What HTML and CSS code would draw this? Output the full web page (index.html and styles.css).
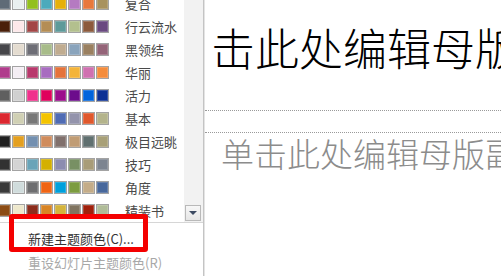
FILE: index.html
```html
<!DOCTYPE html>
<html lang="zh-CN">
<head>
<meta charset="utf-8">
<title>主题颜色</title>
<link rel="stylesheet" href="styles.css">
</head>
<body>
<div class="panel">
  <div class="gallery">
    <div class="list">
      <div class="row"><div class="sw"><i style="background:#5f6b77"></i><i style="background:#e9efef"></i><i style="background:#93c01f"></i><i style="background:#4baabc"></i><i style="background:#e6b00a"></i><i style="background:#b57ac1"></i><i style="background:#e8783c"></i><i style="background:#a8925e"></i></div><span class="label">复合</span></div>
      <div class="row"><div class="sw"><i style="background:#4a1f0a"></i><i style="background:#fde8ea"></i><i style="background:#a34646"></i><i style="background:#b48d55"></i><i style="background:#5e9a9a"></i><i style="background:#b3c08e"></i><i style="background:#8c5a3c"></i><i style="background:#6a4a80"></i></div><span class="label">行云流水</span></div>
      <div class="row"><div class="sw"><i style="background:#46464a"></i><i style="background:#e4dcd0"></i><i style="background:#6e6e76"></i><i style="background:#a8bc8a"></i><i style="background:#c0ac90"></i><i style="background:#8aa4bc"></i><i style="background:#9a8060"></i><i style="background:#946478"></i></div><span class="label">黑领结</span></div>
      <div class="row"><div class="sw"><i style="background:#b03c8c"></i><i style="background:#f4eef4"></i><i style="background:#b8386c"></i><i style="background:#a86cc0"></i><i style="background:#e5733a"></i><i style="background:#f4b43a"></i><i style="background:#d070b0"></i><i style="background:#f48c3c"></i></div><span class="label">华丽</span></div>
      <div class="row"><div class="sw"><i style="background:#5f5f5f"></i><i style="background:#d0d0d0"></i><i style="background:#f0308c"></i><i style="background:#e0005c"></i><i style="background:#9c0c8c"></i><i style="background:#6c0c8c"></i><i style="background:#0064dc"></i><i style="background:#0c3094"></i></div><span class="label">活力</span></div>
      <div class="row"><div class="sw"><i style="background:#dc2830"></i><i style="background:#d0d0b4"></i><i style="background:#787878"></i><i style="background:#f4c400"></i><i style="background:#506cb4"></i><i style="background:#9494ac"></i><i style="background:#e0582c"></i><i style="background:#b4b48c"></i></div><span class="label">基本</span></div>
      <div class="row"><div class="sw"><i style="background:#202020"></i><i style="background:#e4a020"></i><i style="background:#7490b0"></i><i style="background:#d08c5c"></i><i style="background:#80706c"></i><i style="background:#c09c74"></i><i style="background:#607070"></i><i style="background:#a8a078"></i></div><span class="label">极目远眺</span></div>
      <div class="row"><div class="sw"><i style="background:#323232"></i><i style="background:#d4d4d4"></i><i style="background:#6aa4b8"></i><i style="background:#d4b000"></i><i style="background:#8c8cb0"></i><i style="background:#789064"></i><i style="background:#a89c78"></i><i style="background:#7c8490"></i></div><span class="label">技巧</span></div>
      <div class="row"><div class="sw"><i style="background:#3a3a3a"></i><i style="background:#d0dcdc"></i><i style="background:#6e6e70"></i><i style="background:#f06414"></i><i style="background:#00a0dc"></i><i style="background:#7c9c40"></i><i style="background:#c4ac88"></i><i style="background:#48689c"></i></div><span class="label">角度</span></div>
      <div class="row"><div class="sw"><i style="background:#8c4c14"></i><i style="background:#eee8cc"></i><i style="background:#8c2c1c"></i><i style="background:#d88424"></i><i style="background:#d4b43c"></i><i style="background:#807460"></i><i style="background:#a0200c"></i><i style="background:#b0bc98"></i></div><span class="label">精装书</span></div>
    </div>
    <div class="track">
      <div class="down"><span class="tri"></span></div>
    </div>
  </div>
  <div class="menu">
    <div class="item">新建主题颜色(C)...</div>
    <div class="item disabled">重设幻灯片主题颜色(R)</div>
  </div>
  <div class="highlight"></div>
</div>
<div class="slide">
  <div class="title-box"><div class="title">击此处编辑母版标题样式</div></div>
  <div class="body-box"><div class="subtitle">单击此处编辑母版副标题样式</div></div>
</div>
</body>
</html>
```

FILE: styles.css
```css
html, body {
  margin: 0;
  padding: 0;
}
body {
  width: 501px;
  height: 276px;
  overflow: hidden;
  display: flex;
  background: #ffffff;
  font-family: "Noto Sans CJK SC", "Noto Sans", sans-serif;
}
.panel {
  position: relative;
  width: 203px;
  flex: none;
  border-right: 1px solid #c4c4c4;
  display: flex;
  flex-direction: column;
  background: #ffffff;
}
.gallery {
  height: 222px;
  flex: none;
  display: flex;
  border-bottom: 1px solid #d6d6d6;
  overflow: hidden;
}
.list {
  flex: 1;
  margin-top: -8px;
  margin-left: -2px;
  display: flex;
  flex-direction: column;
}
.row {
  height: 23px;
  flex: none;
  display: flex;
  align-items: center;
}
.sw {
  display: flex;
  gap: 1px;
}
.sw i {
  display: block;
  width: 13px;
  height: 13px;
  box-sizing: border-box;
  border: 1px solid #a3a3a3;
  box-shadow: inset 0 0 0 1px rgba(255, 255, 255, 0.18);
}
.label {
  margin-left: 16px;
  font-size: 13px;
  line-height: 16px;
  color: #4a4a4a;
  white-space: nowrap;
}
.track {
  width: 19px;
  flex: none;
  background: #f2f2f2;
  display: flex;
  flex-direction: column;
  justify-content: flex-end;
  align-items: flex-start;
}
.down {
  width: 16px;
  height: 16px;
  box-sizing: border-box;
  margin: 0 0 1px 1px;
  border: 1px solid #b9b9b9;
  background: linear-gradient(#f7f7f7, #e6e6e6);
  display: flex;
  align-items: center;
  justify-content: center;
}
.tri {
  width: 0;
  height: 0;
  border-left: 4px solid transparent;
  border-right: 4px solid transparent;
  border-top: 4px solid #3c4a62;
}
.menu {
  padding-top: 4px;
}
.item {
  height: 24px;
  line-height: 24px;
  padding-left: 28px;
  font-size: 13px;
  color: #333333;
  white-space: nowrap;
}
.item.disabled {
  color: #a8a8a8;
}
.highlight {
  position: absolute;
  left: 9px;
  top: 214px;
  width: 139px;
  height: 38px;
  box-sizing: border-box;
  border: 5px solid #f40000;
  border-radius: 3px;
}
.slide {
  flex: 1;
  border-left: 1px solid #e4e4e4;
  overflow: hidden;
  display: flex;
  flex-direction: column;
}
.title-box {
  height: 111px;
  flex: none;
  border-bottom: 1px dotted #9a9a9a;
  padding-top: 25px;
  padding-left: 6px;
  box-sizing: border-box;
}
.title {
  font-size: 44px;
  line-height: 44px;
  font-weight: 300;
  color: #000000;
  white-space: nowrap;
}
.body-box {
  margin-top: 21px;
  border-top: 1px dotted #9a9a9a;
  padding-top: 4px;
  padding-left: 16px;
}
.subtitle {
  font-size: 33px;
  line-height: 33px;
  font-weight: 300;
  color: #8c8c8c;
  white-space: nowrap;
}
```
